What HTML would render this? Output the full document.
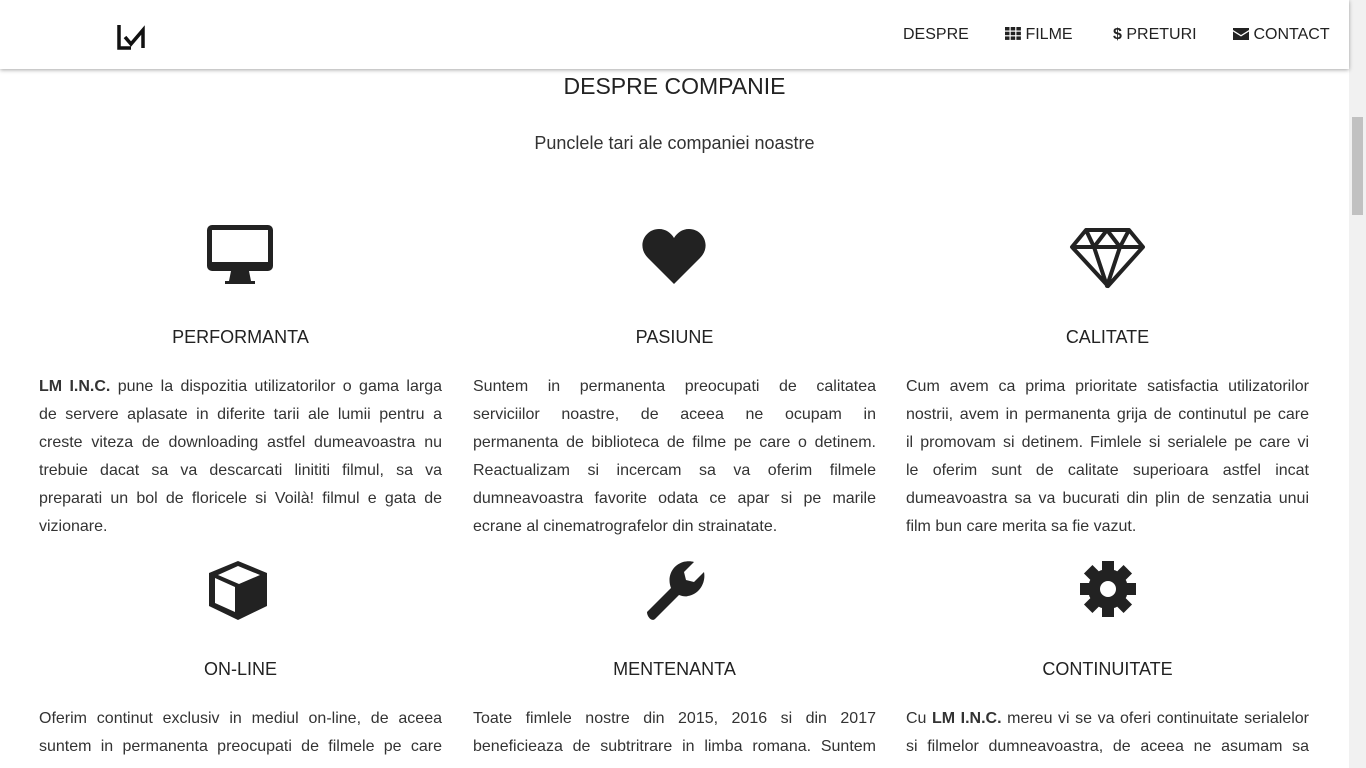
<!DOCTYPE html>
<html><head><meta charset="utf-8"><style>
*{margin:0;padding:0;box-sizing:border-box}
body{width:1366px;height:768px;overflow:hidden;background:#fff;font-family:"Liberation Sans",sans-serif;color:#333;position:relative}
nav{position:absolute;left:0;top:0;width:1349px;height:69px;background:#fff;box-shadow:0 1px 4px rgba(0,0,0,.35);z-index:2}
.logo{position:absolute;left:117px;top:23px}
.menu{position:absolute;top:26px;font-size:16px;color:#222;white-space:nowrap}
.menu svg{vertical-align:-1px}
.sb{position:absolute;right:0;top:0;width:17px;height:768px;background:#f1f1f1}
.sb .th{position:absolute;left:3px;top:117px;width:11px;height:98px;background:#c1c1c1}
h2{position:absolute;top:73px;width:1349px;text-align:center;font-size:23px;font-weight:normal;color:#222}
.sub{position:absolute;top:133px;width:1349px;text-align:center;font-size:18px;color:#333}
.col{position:absolute;width:403px}
.col h3{text-align:center;font-size:18px;font-weight:normal;color:#222;position:absolute;width:403px}
.col p{position:absolute;width:403px;font-size:16px;line-height:28px;color:#333}
.col p span{display:block;text-align:justify;text-align-last:justify;white-space:nowrap}
.col p span.l{text-align-last:left}
.ic{position:absolute;left:0;width:403px;text-align:center}
</style></head><body>
<nav>
<svg class="logo" width="30" height="27" viewBox="0 0 30 27"><path d="M2 2V25H14M8 14l6 7 12-14V25" fill="none" stroke="#111" stroke-width="3.5"/></svg>
<span class="menu" style="left:903px">DESPRE</span>
<span class="menu" style="left:1005px"><svg width="16" height="13" viewBox="0 0 16 13" fill="#222"><rect x="0" y="0" width="4.5" height="3.5"/><rect x="5.7" y="0" width="4.5" height="3.5"/><rect x="11.4" y="0" width="4.5" height="3.5"/><rect x="0" y="4.7" width="4.5" height="3.5"/><rect x="5.7" y="4.7" width="4.5" height="3.5"/><rect x="11.4" y="4.7" width="4.5" height="3.5"/><rect x="0" y="9.4" width="4.5" height="3.5"/><rect x="5.7" y="9.4" width="4.5" height="3.5"/><rect x="11.4" y="9.4" width="4.5" height="3.5"/></svg> FILME</span>
<span class="menu" style="left:1113px"><b>$</b> PRETURI</span>
<span class="menu" style="left:1233px"><svg width="16" height="12" viewBox="0 0 16 12" fill="#222"><path d="M0 0h16v2L8 7 0 2z M0 3.5l8 5 8-5V12H0z"/></svg> CONTACT</span>
</nav>
<div class="sb"><div class="th"></div></div>
<h2>DESPRE COMPANIE</h2>
<div class="sub">Punclele tari ale companiei noastre</div>

<div class="col" style="left:39px;top:0">
<svg class="ic" style="top:223px" height="62" viewBox="0 0 403 62"><rect x="168" y="2" width="66" height="46" rx="5" fill="#222"/><rect x="173" y="7" width="56" height="32" fill="#fff"/><path d="M192 48h18l2 10h4v3h-30v-3h4z" fill="#222"/></svg>
<h3 style="top:327px">PERFORMANTA</h3>
<p style="top:373px"><span><b>LM I.N.C.</b> pune la dispozitia utilizatorilor o gama larga</span><span>de servere aplasate in diferite tarii ale lumii pentru a</span><span>creste viteza de downloading astfel dumeavoastra nu</span><span>trebuie dacat sa va descarcati linititi filmul, sa va</span><span>preparati un bol de floricele si Voilà! filmul e gata de</span><span class="l">vizionare.</span></p>
<svg class="ic" style="top:558px" height="64" viewBox="0 0 403 64"><path d="M199 3l29 12v33l-29 14-29-14V15z" fill="#222"/><path d="M176 20l20 9v25l-20-9zM199 8l22 9-21 9-21-9z" fill="#fff"/></svg>
<h3 style="top:659px">ON-LINE</h3>
<p style="top:705px"><span>Oferim continut exclusiv in mediul on-line, de aceea</span><span>suntem in permanenta preocupati de filmele pe care</span></p>
</div>

<div class="col" style="left:473px;top:0">
<svg class="ic" style="top:228px" height="58" viewBox="0 0 403 58"><path d="M201 56L175 30C163 18 172 1 186 1c7 0 12 4 15 9 3-5 8-9 15-9 14 0 23 17 11 29z" fill="#222"/></svg>
<h3 style="top:327px">PASIUNE</h3>
<p style="top:373px"><span>Suntem in permanenta preocupati de calitatea</span><span>serviciilor noastre, de aceea ne ocupam in</span><span>permanenta de biblioteca de filme pe care o detinem.</span><span>Reactualizam si incercam sa va oferim filmele</span><span>dumneavoastra favorite odata ce apar si pe marile</span><span class="l">ecrane al cinematrografelor din strainatate.</span></p>
<svg class="ic" style="top:559px" height="62" viewBox="0 0 403 62"><path d="M174 53l24-24c-4-10 0-22 12-26 4-1 8-1 11 0l-10 10 2 8 8 2 10-10c2 10-4 22-16 24-3 1-6 0-9-1l-24 24c-3 3-8-2-8-7z" fill="#222"/></svg>
<h3 style="top:659px">MENTENANTA</h3>
<p style="top:705px"><span>Toate fimlele nostre din 2015, 2016 si din 2017</span><span>beneficieaza de subtritrare in limba romana. Suntem</span></p>
</div>

<div class="col" style="left:906px;top:0">
<svg class="ic" style="top:228px" height="62" viewBox="0 0 403 62"><g fill="none" stroke="#222" stroke-width="4" stroke-linejoin="round"><path d="M180 2h43l14 17-35 39-36-39zM166 19h71M188 19l13 39 13-39M180 2l8 17 13-17 13 17 9-17"/></g></svg>
<h3 style="top:327px">CALITATE</h3>
<p style="top:373px"><span>Cum avem ca prima prioritate satisfactia utilizatorilor</span><span>nostrii, avem in permanenta grija de continutul pe care</span><span>il promovam si detinem. Fimlele si serialele pe care vi</span><span>le oferim sunt de calitate superioara astfel incat</span><span>dumeavoastra sa va bucurati din plin de senzatia unui</span><span class="l">film bun care merita sa fie vazut.</span></p>
<svg class="ic" style="top:561px" height="56" viewBox="0 0 403 56"><g transform="translate(202 28)"><g fill="#222"><circle r="20"/><rect x="-6" y="-28" width="12" height="56"/><rect x="-6" y="-28" width="12" height="56" transform="rotate(45)"/><rect x="-6" y="-28" width="12" height="56" transform="rotate(90)"/><rect x="-6" y="-28" width="12" height="56" transform="rotate(135)"/></g><circle r="8" fill="#fff"/></g></svg>
<h3 style="top:659px">CONTINUITATE</h3>
<p style="top:705px"><span>Cu <b>LM I.N.C.</b> mereu vi se va oferi continuitate serialelor</span><span>si filmelor dumneavoastra, de aceea ne asumam sa</span></p>
</div>
</body></html>
